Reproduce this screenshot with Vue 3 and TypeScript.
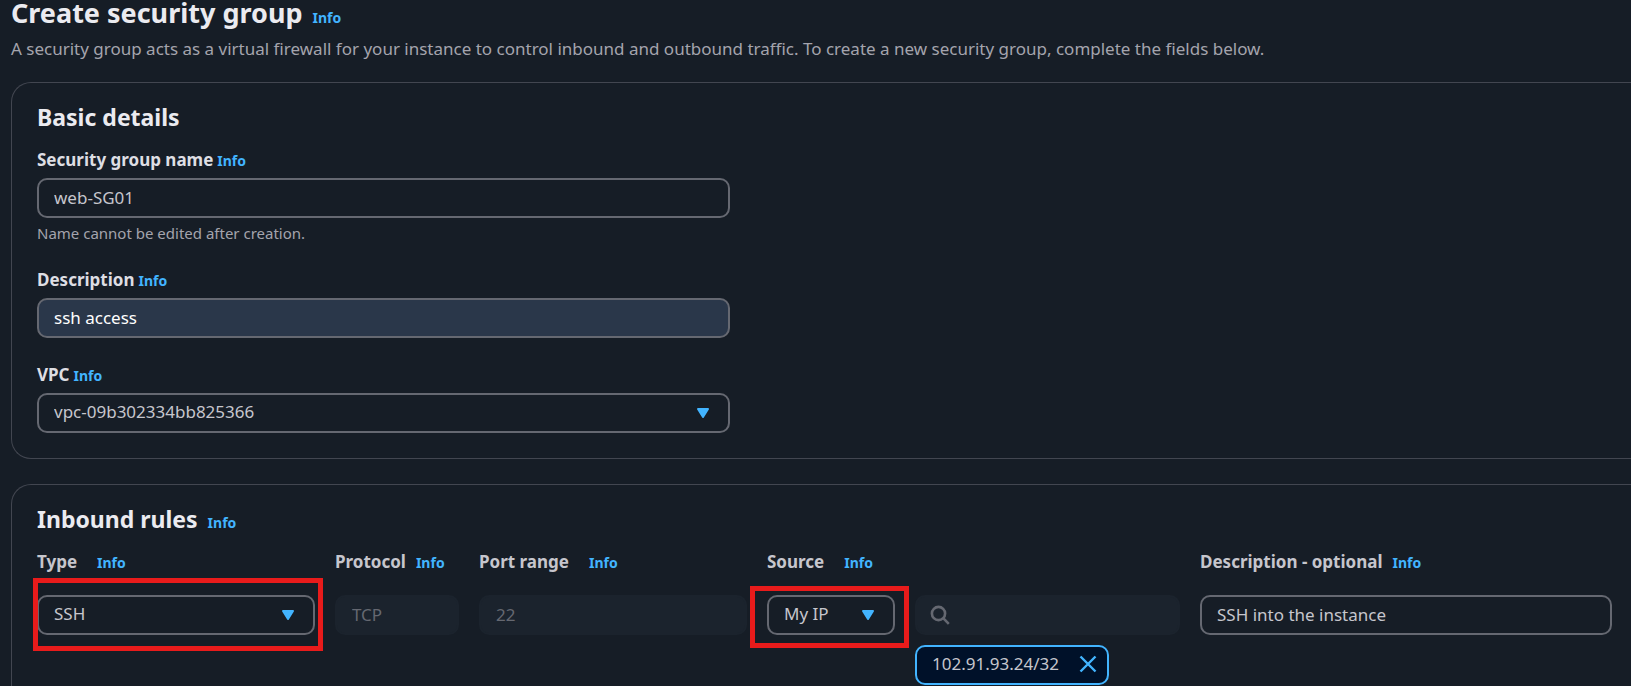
<script setup lang="ts">
import { ref } from 'vue'

const groupName = ref('web-SG01')
const description = ref('ssh access')
const vpc = ref('vpc-09b302334bb825366')
const ruleType = ref('SSH')
const protocol = ref('TCP')
const portRange = ref('22')
const source = ref('My IP')
const search = ref('')
const ruleDescription = ref('SSH into the instance')
const cidrs = ref<string[]>(['102.91.93.24/32'])

function removeCidr(cidr: string): void {
  cidrs.value = cidrs.value.filter((item) => item !== cidr)
}
</script>

<template>
  <main class="page">
    <header class="page-header">
      <div class="heading-line">
        <h1>Create security group</h1>
        <a class="info" href="#info">Info</a>
      </div>
      <p class="lead">
        A security group acts as a virtual firewall for your instance to control inbound and outbound traffic. To create
        a new security group, complete the fields below.
      </p>
    </header>

    <section class="panel">
      <div class="heading-line">
        <h2>Basic details</h2>
      </div>
      <div class="fields">
        <div class="field">
          <div class="label-line">
            <label for="group-name">Security group name</label>
            <a class="info" href="#info">Info</a>
          </div>
          <input id="group-name" v-model="groupName" class="control" type="text" />
          <p class="hint">Name cannot be edited after creation.</p>
        </div>
        <div class="field">
          <div class="label-line">
            <label for="description">Description</label>
            <a class="info" href="#info">Info</a>
          </div>
          <input id="description" v-model="description" class="control filled" type="text" />
        </div>
        <div class="field">
          <div class="label-line">
            <label for="vpc">VPC</label>
            <a class="info" href="#info">Info</a>
          </div>
          <div class="select-wrap">
            <select id="vpc" v-model="vpc" class="control">
              <option>vpc-09b302334bb825366</option>
            </select>
            <svg class="caret" viewBox="0 0 14 12" aria-hidden="true"><path d="M2 2h10l-5 8z" /></svg>
          </div>
        </div>
      </div>
    </section>

    <section class="panel open">
      <div class="heading-line">
        <h2>Inbound rules</h2>
        <a class="info" href="#info">Info</a>
      </div>
      <div class="rule">
        <div class="cell">
          <div class="column-label wide">
            <label for="rule-type">Type</label>
            <a class="info" href="#info">Info</a>
          </div>
          <div class="select-wrap">
            <select id="rule-type" v-model="ruleType" class="control">
              <option>SSH</option>
            </select>
            <svg class="caret" viewBox="0 0 14 12" aria-hidden="true"><path d="M2 2h10l-5 8z" /></svg>
            <span class="marker marker-type"></span>
          </div>
        </div>
        <div class="cell">
          <div class="column-label">
            <label for="protocol">Protocol</label>
            <a class="info" href="#info">Info</a>
          </div>
          <input id="protocol" v-model="protocol" class="control" type="text" disabled />
        </div>
        <div class="cell">
          <div class="column-label wide">
            <label for="port-range">Port range</label>
            <a class="info" href="#info">Info</a>
          </div>
          <input id="port-range" v-model="portRange" class="control" type="text" disabled />
        </div>
        <div class="cell">
          <div class="column-label wide">
            <label for="source">Source</label>
            <a class="info" href="#info">Info</a>
          </div>
          <div class="select-wrap">
            <select id="source" v-model="source" class="control">
              <option>My IP</option>
            </select>
            <svg class="caret" viewBox="0 0 14 12" aria-hidden="true"><path d="M2 2h10l-5 8z" /></svg>
            <span class="marker marker-source"></span>
          </div>
        </div>
        <div class="cell">
          <div class="column-label"></div>
          <div class="select-wrap">
            <input v-model="search" class="control" type="text" aria-label="Source address" disabled />
            <svg class="search-icon" viewBox="0 0 20 20" aria-hidden="true">
              <circle cx="8.5" cy="8.5" r="6.6" />
              <path d="M13.2 13.2l5.6 5.6" />
            </svg>
          </div>
          <div v-for="cidr in cidrs" :key="cidr" class="token">
            <span>{{ cidr }}</span>
            <button type="button" :aria-label="`Remove ${cidr}`" @click="removeCidr(cidr)">
              <svg viewBox="0 0 18 18" aria-hidden="true"><path d="M1.5 1.5l15 15M16.5 1.5l-15 15" /></svg>
            </button>
          </div>
        </div>
        <div class="cell">
          <div class="column-label">
            <label for="rule-description">Description - optional</label>
            <a class="info" href="#info">Info</a>
          </div>
          <input id="rule-description" v-model="ruleDescription" class="control" type="text" />
        </div>
      </div>
    </section>
  </main>
</template>

<style>
body {
  margin: 0;
  background: #161d26;
}
</style>

<style scoped>
.page {
  box-sizing: border-box;
  min-height: 100vh;
  display: flex;
  flex-direction: column;
  padding-left: 11px;
  overflow: hidden;
  background: #161d26;
  color: #c6c6cd;
  font-family: 'Noto Sans', 'Open Sans', sans-serif;
  font-size: 17px;
  line-height: 24px;
}

h1,
h2,
p {
  margin: 0;
}

.page-header {
  margin: -7px 0 21px;
}

.heading-line {
  display: flex;
  align-items: baseline;
  gap: 10px;
}

h1 {
  color: #ebebf0;
  font-size: 27px;
  line-height: 40px;
  font-weight: 700;
}

h2 {
  color: #ebebf0;
  font-size: 23px;
  line-height: 32px;
  font-weight: 700;
}

.lead {
  margin-top: 4px;
  color: #a4a4ad;
  white-space: nowrap;
}

.info {
  color: #42b4ff;
  font-size: 14px;
  line-height: 20px;
  font-weight: 700;
  text-decoration: none;
}

.panel {
  padding: 18px 19px 25px 25px;
  border: 1px solid #424650;
  border-right: 0;
  border-radius: 20px 0 0 20px;
}

.panel.open {
  flex: 1;
  margin-top: 25px;
  padding-bottom: 0;
  border-bottom: 0;
  border-bottom-left-radius: 0;
}

.fields {
  width: 44%;
  display: flex;
  flex-direction: column;
  gap: 25px;
  margin-top: 15px;
}

.label-line {
  display: flex;
  align-items: baseline;
  gap: 4px;
  margin-bottom: 6px;
}

label {
  font-weight: 700;
}

.label-line label {
  color: #dedee3;
}

.control {
  box-sizing: border-box;
  display: block;
  width: 100%;
  height: 40px;
  margin: 0;
  padding: 0 15px 2px;
  border: 2px solid #656871;
  border-radius: 10px;
  outline: none;
  appearance: none;
  background: #161d26;
  color: #c6c6cd;
  font: inherit;
}

.control.filled {
  background: #2a374a;
  color: #ffffff;
}

.control:disabled {
  border-color: #1b232d;
  background: #1b232d;
  color: #656871;
  opacity: 1;
}

.hint {
  margin-top: 5px;
  color: #a4a4ad;
  font-size: 15px;
  line-height: 20px;
}

.select-wrap {
  position: relative;
}

.caret {
  position: absolute;
  top: 14px;
  right: 20px;
  width: 14px;
  height: 12px;
  fill: #42b4ff;
  stroke: #42b4ff;
  stroke-width: 2;
  stroke-linejoin: round;
  pointer-events: none;
}

.rule {
  display: grid;
  grid-template-columns: 278fr 124fr 268fr 128fr 265fr 412fr;
  gap: 20px;
  margin-top: 15px;
}

.cell {
  min-width: 0;
}

.column-label {
  display: flex;
  align-items: baseline;
  gap: 10px;
  height: 24px;
  margin-bottom: 21px;
  white-space: nowrap;
}

.column-label.wide {
  gap: 20px;
}

.marker {
  position: absolute;
  border: 5px solid #e81b1b;
  pointer-events: none;
}

.marker-type {
  inset: -17px -8px -16px -4px;
}

.marker-source {
  inset: -9px -14px -13px -17px;
}

.search-icon {
  position: absolute;
  top: 10px;
  left: 15px;
  width: 20px;
  height: 20px;
  fill: none;
  stroke: #656871;
  stroke-width: 2.6;
}

.token {
  box-sizing: border-box;
  display: inline-flex;
  align-items: center;
  justify-content: space-between;
  gap: 10px;
  min-width: 194px;
  height: 40px;
  margin-top: 10px;
  padding: 0 10px 2px 15px;
  border: 2px solid #42b4ff;
  border-radius: 10px;
  background: #001129;
}

.token button {
  display: flex;
  margin: 0;
  padding: 0;
  border: 0;
  background: none;
  cursor: pointer;
}

.token svg {
  width: 18px;
  height: 18px;
  fill: none;
  stroke: #42b4ff;
  stroke-width: 2.4;
}
</style>
